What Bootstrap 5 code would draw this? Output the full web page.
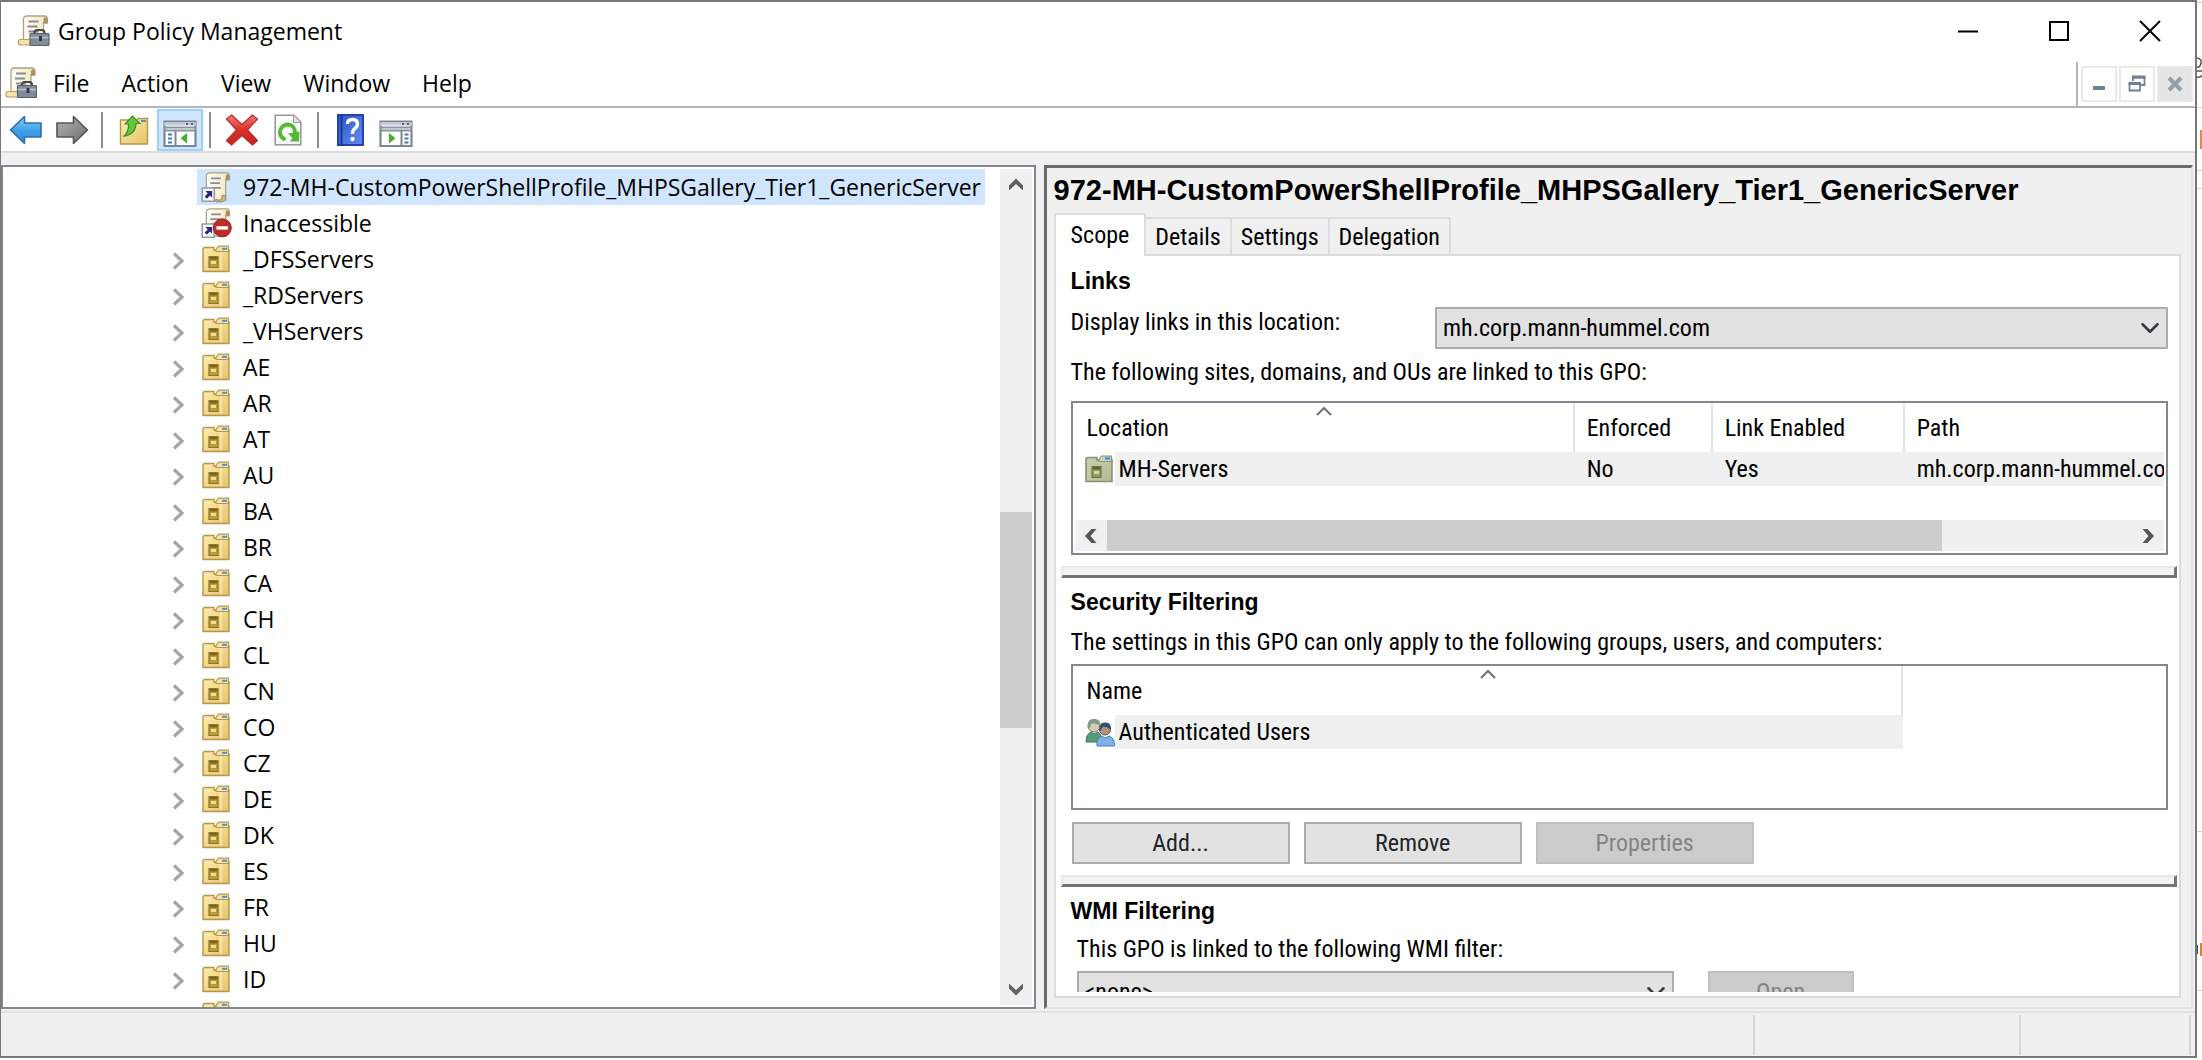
<!DOCTYPE html>
<html lang="en">
<head>
<meta charset="utf-8">
<meta name="viewport" content="width=device-width, initial-scale=1">
<title>Group Policy Management</title>
<link href="https://cdn.jsdelivr.net/npm/bootstrap@5.3.0/dist/css/bootstrap.min.css" rel="stylesheet">
<style>
body{font:23px/30px "Open Sans","Noto Sans",sans-serif;color:#000;background:#fff}
button{color:#000}
svg{display:block;flex:none}
.shell{height:100vh}
.mmc{height:calc(100vh - 2px);border:2px solid #777;border-left-width:1px;min-width:0}
.titlebar{height:57px;padding:0 0 0 16px}
.cap-btn,.mdi-btn,.tool,.twist,.menu-btn{border:0;background:none;padding:0}
.cap-btn{width:91px;height:54px}
.menubar{height:49px;border-bottom:2px solid #b3b5b9;padding-left:4px}
.menu-btn{padding:0 16px}
.mdi{border-left:2px solid #b3b5b9;padding:4px 2px 0 3px;gap:2px;margin-top:3px}
.mdi-btn{width:36px;height:36px;border:2px solid #e9e9e9}
.mdi-btn:disabled{background:#e5e5e5}
.toolbar{height:45px;border-bottom:2px solid #dcdcdc;padding:1px 0 0 2px}
.tool{width:46px;height:42px;border:2px solid transparent}
.tool.pressed{background:#d0e6ff;border-color:#99d1ff}
.sep{width:2px;height:36px;background:#8c8c8c;margin:0 8px 0 6px}
.face{background:#f0f0f0}
.work{padding:12px 2px 2px 0;gap:8px}
.tree-pane{width:47.2%;border:2px solid #828790;background:#fff}
.tree{padding:2px 0 0;margin:0;list-style:none;overflow:hidden}
.tree li{height:36px;padding-left:166px}
.twist{width:28px;height:28px;padding:4px 0 0 3px}
.node{padding:0 4px 0 3px;height:36px;gap:11px;color:#000;text-decoration:none;white-space:nowrap}
.node.chosen{background:#d0e6ff}
.vbar{width:32px;background:#f0f0f0;margin:2px 2px 2px 0}
.arr{border:0;background:none;padding:0;height:32px;width:32px}
.thumb{background:#cdcdcd}
.detail{border:3px solid #6b6b6b;border-right:2px solid #e3e3e3;border-bottom:2px solid #e3e3e3;padding:0 10px 9px 7px}
.gpo-name{font:bold 29px/45px "Liberation Sans",sans-serif;margin:0;white-space:nowrap}
.ui{font:24px/30px "Roboto Condensed",Roboto,sans-serif}
.sheet-tabs{height:43px;margin-bottom:-2px;position:relative;z-index:1}
.sheet-tab{border:2px solid #dcdcdc;border-left-width:0;background:#f0f0f0;height:39px;padding:0 9px}
.sheet-tab.active{background:#fff;border-left-width:2px;border-bottom:0;height:43px;padding:0 15px 2px}
.sheet{border:2px solid #dcdcdc;background:#fff;padding-bottom:4px}
.group-title{font:bold 23px/30px "Liberation Sans",sans-serif;margin:0}
.blk{padding:0 11px 0 15px}
.form-select.combo{font:inherit;color:#000;background-color:#e2e2e2;border:2px solid #acacac;border-radius:0;height:42px;padding:0 36px 0 6px;background-position:right 6px center;background-size:20px 20px}
.loc{width:733px}
.list-box{border:2px solid #828790;padding:0 2px 2px;background:#fff}
.grid{table-layout:fixed;border-collapse:separate;border-spacing:0;width:100%}
.grid th{font-weight:400;height:49px;padding:0 12px;border-right:2px solid #e3e3e3;position:relative}
.grid th:last-child:not(.ruled){border-right:0}
.grid td{height:34px;background:#f0f0f0;padding:0 12px;overflow:hidden;white-space:nowrap}
.grid td.pic{background:#fff;padding:0 0 0 10px}
.grid td.lead-cell{padding-left:4px}
.sort{position:absolute;left:50%;top:3px;margin-left:-8px}
.hbar{height:31px;background:#f0f0f0}
.split{height:12px;margin:11px 2px 9px 5px;background:#f3f3f3;border:2px solid #e8e8e8;border-right:3px solid #747474;border-bottom:3px solid #747474}
.push{font:inherit;width:218px;height:42px;background:#e2e2e2;border:2px solid #acacac;border-radius:0;padding:0}
.push:disabled{background:#ccc;border-color:#bfbfbf;color:#838383;opacity:1}
.push.slim{width:146px}
.status{height:45px;border-top:2px solid #e0e0e0}
.status div{border-right:2px solid #d7d7d7;margin:2px 0 1px}
</style>
</head>
<body>
<svg width="0" height="0" class="position-absolute">
<defs>
<linearGradient id="gBlue" x1="0" y1="0" x2="0" y2="1"><stop offset="0" stop-color="#8fd0f8"/><stop offset=".5" stop-color="#41a0e6"/><stop offset="1" stop-color="#2f86d6"/></linearGradient>
<linearGradient id="gGrey" x1="0" y1="0" x2="1" y2="1"><stop offset="0" stop-color="#b5b5b5"/><stop offset="1" stop-color="#6c6c6c"/></linearGradient>
<linearGradient id="gFold" x1="0" y1="0" x2="1" y2="1"><stop offset="0" stop-color="#fdeeb0"/><stop offset="1" stop-color="#e5c26c"/></linearGradient>
<linearGradient id="gSage" x1="0" y1="0" x2="1" y2="1"><stop offset="0" stop-color="#c3d3ae"/><stop offset="1" stop-color="#b9b995"/></linearGradient>
<linearGradient id="gPaper" x1="0" y1="0" x2="1" y2="0"><stop offset="0" stop-color="#fffef4"/><stop offset="1" stop-color="#f3e7bb"/></linearGradient>
<linearGradient id="gRed" x1="0" y1="0" x2="0" y2="1"><stop offset="0" stop-color="#f07f78"/><stop offset=".5" stop-color="#d93028"/><stop offset="1" stop-color="#c92019"/></linearGradient>
<linearGradient id="gHelp" x1="0" y1="0" x2="1" y2="1"><stop offset="0" stop-color="#3157c8"/><stop offset="1" stop-color="#5f8cf0"/></linearGradient>
<symbol id="scroll" viewBox="0 0 32 32">
<path d="M6 4Q6 1 10 1H27Q30 1 30 5V8H26V29H6Z" fill="url(#gPaper)" stroke="#a9a188" stroke-width="1.3"/>
<path d="M26 8V4Q27 1 29 3Q31 5 29 8Z" fill="#a5915a"/>
<path d="M11 6.500H21M10 11.500H20M11 16.500H21" stroke="#878aa0" stroke-width="1.800"/>
</symbol>
<symbol id="gpm" viewBox="0 0 32 32">
<use href="#scroll"/>
<path d="M1 26.500Q1 24.500 3 24.500H13V30H3Q1 30 1 28Z" fill="#f8e3aa" stroke="#b79c60" stroke-width="1.200"/>
<path d="M17 18Q17 15 20 15H24Q27 15 27 18" fill="none" stroke="#45484a" stroke-width="2.200"/>
<rect x="12.500" y="18.500" width="19" height="12" rx="1" fill="#7f8d99" stroke="#566069" stroke-width="1.200"/>
<path d="M13 22.500H31" stroke="#b4c0c9" stroke-width="1.800"/><rect x="21.500" y="21" width="3" height="5" fill="#33393f"/>
</symbol>
<symbol id="badge" viewBox="0 0 32 32"><path d="M1.800 16.500H14.200V30.200H1.800Z" fill="#fff" stroke="#9799a0" stroke-width="1.700"/><path d="M5 19.500H12V26.500L9.800 24.300L6.500 27.600L4.300 25.400L7.500 22.100Z" fill="#29277f"/></symbol>
<symbol id="gpolink" viewBox="0 0 32 32"><use href="#scroll"/><path d="M16 28Q19 31 22 28V24H26V28Q25 31 21 31H16Z" fill="#cdb878" stroke="#9b8e68"/><use href="#badge"/></symbol>
<symbol id="gpobad" viewBox="0 0 32 32"><use href="#scroll"/><use href="#badge"/><circle cx="22.500" cy="20.500" r="9.300" fill="#bf2b27" stroke="#962020"/><path d="M16.500 18.800H28.500V22.300H16.500Z" fill="#fff"/></symbol>
<symbol id="ou" viewBox="0 0 28 28">
<path d="M1 5Q1 2.500 3 2.500H12V5H27V26.500H1Z" fill="url(#gFold)" stroke="#b89548" stroke-width="1.400"/>
<path d="M14 4.500L16.500 1.200H26.500V6.500H14Z" fill="#f7e3a0" stroke="#b89548" stroke-width="1.200"/><rect x="20" y="2.800" width="5" height="2" fill="#4b8fe0"/>
<path d="M19 7V25" stroke="#fdf3c6"/>
<path d="M7 11.500H16V22.500H7Z" fill="#b99a3c" stroke="#8f7526" stroke-width="1.200"/><path d="M8 12H15.500V14.500H8Z" fill="#7d6418"/><path d="M9 16H14V19H9Z" fill="#f1dd8c"/>
</symbol>
<symbol id="ouSage" viewBox="0 0 28 28">
<path d="M1 5Q1 2.500 3 2.500H12V5H27V26.500H1Z" fill="url(#gSage)" stroke="#8a9270" stroke-width="1.600"/>
<path d="M14 4.500L16.500 1.200H26.500V6.500H14Z" fill="#c9d6bc" stroke="#8a9a80" stroke-width="1.200"/><rect x="20" y="2.500" width="5" height="2" fill="#3f86e0"/>
<path d="M7 11.500H16V22.500H7Z" fill="#8e9c5e" stroke="#6a7440" stroke-width="1.200"/><path d="M8 12H15.500V14.500H8Z" fill="#5a6432"/><path d="M9 16H14V19H9Z" fill="#ccd9a8"/>
</symbol>
<symbol id="chev" viewBox="0 0 14 18"><path d="M2 1.500L10 9L2 16.500" fill="none" stroke="#a6a6a6" stroke-width="3.200"/></symbol>
<symbol id="bold-up" viewBox="0 0 16 16"><path d="M8 1.500L15 8.500V13.500L8 7L1 13.500V8.500Z" fill="#606060"/></symbol>
<symbol id="caret" viewBox="0 0 16 10"><path d="M1 9L8 2L15 9" fill="none" stroke="#727272" stroke-width="2"/></symbol>
</defs>
</svg>

<div class="shell d-flex align-items-start">
<main class="mmc d-flex flex-column flex-fill">
  <header class="titlebar d-flex align-items-center flex-shrink-0">
    <svg width="33" height="32"><use href="#gpm"/></svg>
    <span class="ms-2 me-auto">Group Policy Management</span>
    <button class="cap-btn d-flex align-items-center justify-content-center" aria-label="Minimize"><svg width="20" height="20"><path d="M0 10.500H20" stroke="#000" stroke-width="2"/></svg></button>
    <button class="cap-btn d-flex align-items-center justify-content-center" aria-label="Maximize"><svg width="20" height="20"><path d="M1 1H19V19H1Z" fill="none" stroke="#000" stroke-width="2"/></svg></button>
    <button class="cap-btn d-flex align-items-center justify-content-center" aria-label="Close"><svg width="22" height="22"><path d="M1 1L21 21M21 1L1 21" stroke="#000" stroke-width="2"/></svg></button>
  </header>

  <nav class="menubar d-flex align-items-center flex-shrink-0" aria-label="Menu bar">
    <svg width="32" height="32"><use href="#gpm"/></svg>
    <button class="menu-btn">File</button><button class="menu-btn">Action</button><button class="menu-btn">View</button><button class="menu-btn">Window</button><button class="menu-btn">Help</button>
    <div class="mdi d-flex ms-auto align-self-stretch">
      <button class="mdi-btn bg-white d-flex align-items-center justify-content-center" aria-label="Minimize child"><svg width="14" height="16"><path d="M1 12H13" stroke="#718093" stroke-width="4"/></svg></button>
      <button class="mdi-btn bg-white d-flex align-items-center justify-content-center" aria-label="Restore child"><svg width="18" height="18"><path d="M5 6V2.500H16.500V10H13M1.500 8.500H12V15.500H1.500Z" fill="none" stroke="#718093" stroke-width="1.800"/><path d="M4 2H17.400M.6 8.500H13" stroke="#718093" stroke-width="3.200"/></svg></button>
      <button class="mdi-btn d-flex align-items-center justify-content-center" disabled aria-label="Close child"><svg width="16" height="16"><path d="M2 2L14 14M14 2L2 14" stroke="#959eab" stroke-width="4"/></svg></button>
    </div>
  </nav>

  <div class="toolbar d-flex align-items-center flex-shrink-0" role="toolbar">
    <button class="tool d-flex align-items-center justify-content-center" aria-label="Back"><svg width="34" height="30" viewBox="0 0 34 30"><path d="M1.500 15L15.500 1.500V8H32V22H15.500V28.500Z" fill="url(#gBlue)" stroke="#2b6fb8" stroke-width="1.600" stroke-linejoin="round"/></svg></button>
    <button class="tool d-flex align-items-center justify-content-center" aria-label="Forward"><svg width="34" height="30" viewBox="0 0 34 30"><path d="M32.500 15L18.500 1.500V8H2V22H18.500V28.500Z" fill="url(#gGrey)" stroke="#555" stroke-width="1.600" stroke-linejoin="round"/></svg></button>
    <span class="sep"></span>
    <button class="tool d-flex align-items-center justify-content-center" aria-label="Up one level"><svg width="30" height="30" viewBox="0 0 30 30"><path d="M1.500 5H12V7H17L19 3.500H28.500V29H1.500Z" fill="url(#gFold)" stroke="#b89548" stroke-width="1.400"/><rect x="22" y="5" width="5" height="2" fill="#4b8fe0"/><path d="M4.500 21.500Q10 17 9.500 9H6L13.500 1L21 8.500H17Q17 19 4.500 21.500Z" fill="#62c839" stroke="#3c8f22" stroke-width="1.200"/></svg></button>
    <button class="tool pressed d-flex align-items-end justify-content-center" aria-label="Show or hide console tree"><svg width="34" height="29" viewBox="0 0 34 29"><path d="M1.500 1.500H32.500V26H1.500Z" fill="#fff" stroke="#7d8794" stroke-width="2.200"/><path d="M1 4H33" stroke="#c5cbd2" stroke-width="3"/><path d="M1 7.500H33M1 10.500H33" stroke="#8a94a1" stroke-width="1.800"/><path d="M12.500 10V26" stroke="#7d8794" stroke-width="2"/><path d="M23 4H25M28 4H30" stroke="#4f6078" stroke-width="2"/><path d="M5 14.500H9M5 18.500H9M5 22.500H9" stroke="#4379b8" stroke-width="2"/><path d="M24 13V23.500L17.500 18.200Z" fill="#44b02a"/></svg></button>
    <span class="sep"></span>
    <button class="tool d-flex align-items-center justify-content-center" aria-label="Delete"><svg width="34" height="32" viewBox="0 0 34 32"><path d="M1.500 5L6.500 1L17 10.500L27.500 1L32.500 5L22.500 16L32.500 26.500L27.500 31L17 21.500L6.500 31L1.500 26.500L11.500 16Z" fill="url(#gRed)" stroke="#b3312c" stroke-width="1.200" stroke-linejoin="round"/></svg></button>
    <button class="tool d-flex align-items-center justify-content-center" aria-label="Refresh"><svg width="28" height="32" viewBox="0 0 28 32"><path d="M1.200 1.200H20L26.800 8V30.800H1.200Z" fill="#fbfbfb" stroke="#999" stroke-width="1.600"/><path d="M19.500 1.500V8.500H26.500" fill="#e4e4e4" stroke="#999"/><path d="M11.500 25.500Q5 23 6 17Q8 10.500 14 10.500Q21 11 21 19" fill="none" stroke="#52bb32" stroke-width="3.800"/><path d="M14 19.500L25.500 17.500L25 27.500H16L18.500 24Z" fill="#52bb32"/></svg></button>
    <span class="sep"></span>
    <button class="tool d-flex align-items-center justify-content-center" aria-label="Help"><svg width="27" height="32" viewBox="0 0 27 32"><path d="M1 1H26V31H1Z" fill="url(#gHelp)" stroke="#2341a8" stroke-width="2"/><path d="M4.500 1V31" stroke="#1d3798" stroke-width="2"/><path d="M10.500 10Q10.500 5.500 15.500 5.500Q20.500 5.500 20.500 10Q20.500 13 17.500 14.800Q15.500 16.300 15.500 20" fill="none" stroke="#fff" stroke-width="3.400"/><circle cx="15.500" cy="25" r="2.200" fill="#fff"/></svg></button>
    <button class="tool d-flex align-items-end justify-content-center" aria-label="Show or hide action pane"><svg width="34" height="29" viewBox="0 0 34 29"><path d="M1.500 1.500H32.500V26H1.500Z" fill="#fff" stroke="#7d8794" stroke-width="2.200"/><path d="M1 4H33" stroke="#c5cbd2" stroke-width="3"/><path d="M1 7.500H33M1 10.500H33" stroke="#8a94a1" stroke-width="1.800"/><path d="M22.500 10V26" stroke="#7d8794" stroke-width="2"/><path d="M23 4H25M28 4H30" stroke="#4f6078" stroke-width="2"/><path d="M25.500 14.500H29.500M25.500 18.500H29.500M25.500 22.500H29.500" stroke="#4379b8" stroke-width="2"/><path d="M10 13V23.500L16.500 18.200Z" fill="#44b02a"/></svg></button>
  </div>

  <div class="work face d-flex flex-fill overflow-hidden">
    <section class="tree-pane d-flex flex-shrink-0 overflow-hidden" aria-label="Console tree">
      <ul class="tree flex-fill" id="tree">
        <li class="d-flex"><span class="twist"></span><a href="#" class="node chosen d-flex align-items-center"><svg width="32" height="31"><use href="#gpolink"/></svg>972-MH-CustomPowerShellProfile_MHPSGallery_Tier1_GenericServer</a></li>
        <li class="d-flex"><span class="twist"></span><a href="#" class="node d-flex align-items-center"><svg width="32" height="31"><use href="#gpobad"/></svg>Inaccessible</a></li>
      </ul>
      <div class="vbar d-flex flex-column">
        <button class="arr d-flex align-items-center justify-content-center" aria-label="Scroll up"><svg width="16" height="16"><use href="#bold-up"/></svg></button>
        <div class="flex-fill d-flex flex-column"><div style="height:40.300%"></div><div class="thumb" style="height:28%"></div></div>
        <button class="arr d-flex align-items-center justify-content-center" aria-label="Scroll down"><svg width="16" height="16" viewBox="0 0 16 16"><path d="M8 14.500L15 7.500V2.500L8 9L1 2.500V7.500Z" fill="#606060"/></svg></button>
      </div>
    </section>

    <section class="detail face d-flex flex-column flex-fill overflow-hidden">
      <h1 class="gpo-name flex-shrink-0">972-MH-CustomPowerShellProfile_MHPSGallery_Tier1_GenericServer</h1>
      <div class="sheet-tabs ui d-flex align-items-end flex-shrink-0" role="tablist">
        <button class="sheet-tab active" role="tab" aria-selected="true">Scope</button><button class="sheet-tab" role="tab">Details</button><button class="sheet-tab" role="tab">Settings</button><button class="sheet-tab" role="tab">Delegation</button>
      </div>
      <div class="sheet ui flex-fill d-flex flex-column overflow-hidden">
       <div class="flex-fill overflow-hidden">
        <div class="blk" style="padding-top:10px">
          <h2 class="group-title">Links</h2>
          <div class="d-flex justify-content-between mb-2" style="margin-top:11px">
            <label for="loc">Display links in this location:</label>
            <select id="loc" class="form-select combo loc"><option>mh.corp.mann-hummel.com</option></select>
          </div>
          <div>The following sites, domains, and OUs are linked to this GPO:</div>
          <div class="list-box" style="margin-top:14px">
            <table class="grid"><colgroup><col style="width:40px"><col style="width:460px"><col style="width:138px"><col style="width:192px"><col></colgroup>
              <thead><tr><th colspan="2">Location<svg class="sort" width="16" height="10"><use href="#caret"/></svg></th><th>Enforced</th><th>Link Enabled</th><th>Path</th></tr></thead>
              <tbody><tr><td class="pic"><svg width="28" height="28"><use href="#ouSage"/></svg></td><td class="lead-cell">MH-Servers</td><td>No</td><td>Yes</td><td class="pe-0">mh.corp.mann-hummel.com</td></tr></tbody>
            </table>
            <div class="hbar d-flex" style="margin-top:34px">
              <button class="arr d-flex align-items-center justify-content-center" aria-label="Scroll left"><svg width="14" height="16" viewBox="0 0 14 16"><path d="M1 8L7.500 1H12.500L6.500 8L12.500 15H7.500Z" fill="#555"/></svg></button>
              <div class="flex-fill"><div class="thumb h-100" style="width:81.500%"></div></div>
              <button class="arr d-flex align-items-center justify-content-center" aria-label="Scroll right"><svg width="14" height="16" viewBox="0 0 14 16"><path d="M13 8L6.500 1H1.500L7.500 8L1.500 15H6.500Z" fill="#555"/></svg></button>
            </div>
          </div>
        </div>
        <div class="split"></div>
        <div class="blk">
          <h2 class="group-title">Security Filtering</h2>
          <div style="margin-top:10px">The settings in this GPO can only apply to the following groups, users, and computers:</div>
          <div class="list-box" style="margin-top:7px;padding-bottom:59px">
            <table class="grid" style="width:76%"><colgroup><col style="width:40px"><col></colgroup>
              <thead><tr><th colspan="2" class="ruled">Name<svg class="sort" width="16" height="10"><use href="#caret"/></svg></th></tr></thead>
              <tbody><tr><td class="pic"><svg width="30" height="30" viewBox="0 0 30 30"><path d="M1 25Q1 17 6 15L9 17L13 15Q17 17 16 25Z" fill="#579a76" stroke="#3c7a5a"/><circle cx="9" cy="9" r="6" fill="#d9c9b0" stroke="#66806e"/><path d="M3 10Q2 1 9.500 2Q16 2 15 9Q10 5 6 7Q5 13 3 10Z" fill="#7f9c88"/><path d="M12 29Q11 21 17 19L20 21L24 19Q30 21 29.500 29Z" fill="#7eb2e8" stroke="#4a80bd"/><circle cx="20" cy="12.500" r="5.500" fill="#b8917c" stroke="#4a5f78"/><path d="M14.500 13Q14 4.500 20.500 5.500Q27 5.500 26 14Q24 10 20 10Q17 9 16 14Z" fill="#35506f"/></svg></td><td class="lead-cell">Authenticated Users</td></tr></tbody>
            </table>
          </div>
          <div class="d-flex" style="margin:12px 0 0 1px;gap:14px">
            <button class="btn push">Add...</button><button class="btn push">Remove</button><button class="btn push" disabled>Properties</button>
          </div>
        </div>
        <div class="split"></div>
        <div class="blk">
          <h2 class="group-title">WMI Filtering</h2>
          <div style="margin:8px 0 0 6px">
            <label for="wmi" class="d-block">This GPO is linked to the following WMI filter:</label>
            <div class="d-flex" style="margin-top:7px;gap:34px">
              <select id="wmi" class="form-select combo" style="width:597px"><option>&lt;none&gt;</option></select>
              <button class="btn push slim" disabled>Open</button>
            </div>
          </div>
        </div>
       </div>
      </div>
    </section>
  </div>

  <footer class="status face d-flex flex-shrink-0">
    <div class="flex-fill"></div><div style="width:266px"></div><div style="width:170px"></div><span class="ps-1"></span>
  </footer>
</main>
<svg width="5" height="1058" aria-hidden="true"><path d="M0 2.500H5M0 107.500H5M0 170.500H5M0 188.500H5M0 831.500H5M0 990.500H5" stroke="#d5d5d5"/><path d="M0 58Q5 59 4 63Q3 68 0 67M0 71H5M0 77Q4 78 5 75" fill="none" stroke="#555" stroke-width="1.500"/><path d="M3 130H5V149H3Z" fill="#d98b4a"/><path d="M3 943H5V956H3Z" fill="#d98322"/><path d="M0 945H1V954H0Z" fill="#2a4674"/></svg>
</div>

<script>
const names = ["_DFSServers","_RDServers","_VHServers","AE","AR","AT","AU","BA","BR","CA","CH","CL","CN","CO","CZ","DE","DK","ES","FR","HU","ID","IN"];
document.getElementById("tree").insertAdjacentHTML("beforeend", names.map(n =>
  `<li class="d-flex align-items-center"><button class="twist d-flex align-items-center" aria-label="Expand ${n}"><svg width="14" height="18"><use href="#chev"/></svg></button><a href="#" class="node d-flex align-items-center"><svg width="32" height="28"><use href="#ou"/></svg>${n}</a></li>`).join(""));
</script>
<script src="https://cdn.jsdelivr.net/npm/bootstrap@5.3.0/dist/js/bootstrap.bundle.min.js"></script>
</body>
</html>
